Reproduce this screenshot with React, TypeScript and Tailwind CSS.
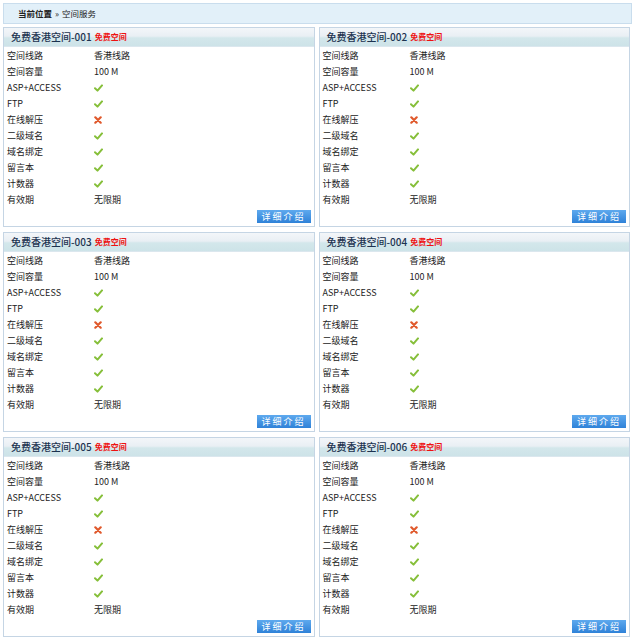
import React from "react";

const Check = () => (
  <svg width="9" height="8" viewBox="0 0 9 8" className="block">
    <path d="M1 4.2 L3.5 6.6 L8 1.4" fill="none" stroke="#86bf3a" strokeWidth="2" strokeLinecap="round" strokeLinejoin="round" />
  </svg>
);

const Cross = () => (
  <svg width="8" height="8" viewBox="0 0 8 8" className="block">
    <path d="M1.3 1.3 L6.7 6.7 M6.7 1.3 L1.3 6.7" fill="none" stroke="#e0592c" strokeWidth="2.2" strokeLinecap="round" />
  </svg>
);

type Row = { label: string; value: React.ReactNode };

const rows: Row[] = [
  { label: "空间线路", value: "香港线路" },
  { label: "空间容量", value: "100 M" },
  { label: "ASP+ACCESS", value: <Check /> },
  { label: "FTP", value: <Check /> },
  { label: "在线解压", value: <Cross /> },
  { label: "二级域名", value: <Check /> },
  { label: "域名绑定", value: <Check /> },
  { label: "留言本", value: <Check /> },
  { label: "计数器", value: <Check /> },
  { label: "有效期", value: "无限期" },
];

const Panel = ({ n }: { n: string }) => (
  <div className="flex h-[200px] flex-col border border-[#c5d5e4] bg-white">
    <div className="flex h-[19px] items-center gap-[3px] border-b border-[#dbe7ee] bg-[linear-gradient(to_bottom,#f3f6f9_0%,#e9eff4_45%,#d3e7eb_55%,#cde3e8_100%)] pl-[7px]">
      <span className="text-[10px] font-medium leading-none text-[#1c3350]">免费香港空间-{n}</span>
      <span className="text-[8px] font-bold leading-none text-[#ee1111]">免费空间</span>
    </div>
    <div className="flex flex-col pt-[1px]">
      {rows.map((r) => (
        <div key={r.label} className="flex h-[16px] items-center pl-[3px] text-[9px] text-[#222]">
          <div className="w-[87px]">{r.label}</div>
          <div className="flex items-center">{r.value}</div>
        </div>
      ))}
    </div>
    <div className="flex justify-end pr-[3px] pt-[2px]">
      <div className="flex h-[13px] w-[54px] items-center justify-center bg-[linear-gradient(to_bottom,#5ea9ee,#2f82d8)] text-[9px] tracking-[2px] text-white">
        详细介绍
      </div>
    </div>
  </div>
);

export default function App() {
  return (
    <div
      className="min-h-[641px] w-[632px] bg-white pt-[3px] pl-[3px]"
      style={{ fontFamily: '"Noto Sans CJK SC", "Noto Sans", sans-serif' }}
    >
      <div className="flex h-[21px] w-[629px] items-center border border-[#c9dded] bg-[#e2f0f9] pl-[14px] text-[8.5px] text-[#222]">
        <span className="font-bold">当前位置</span>
        <span className="mx-[3px]">»</span>
        <span>空间服务</span>
      </div>
      <div className="mt-[3px] grid w-[627px] grid-cols-2 gap-x-[4px] gap-y-[5px]">
        {["001", "002", "003", "004", "005", "006"].map((n) => (
          <Panel key={n} n={n} />
        ))}
      </div>
    </div>
  );
}
